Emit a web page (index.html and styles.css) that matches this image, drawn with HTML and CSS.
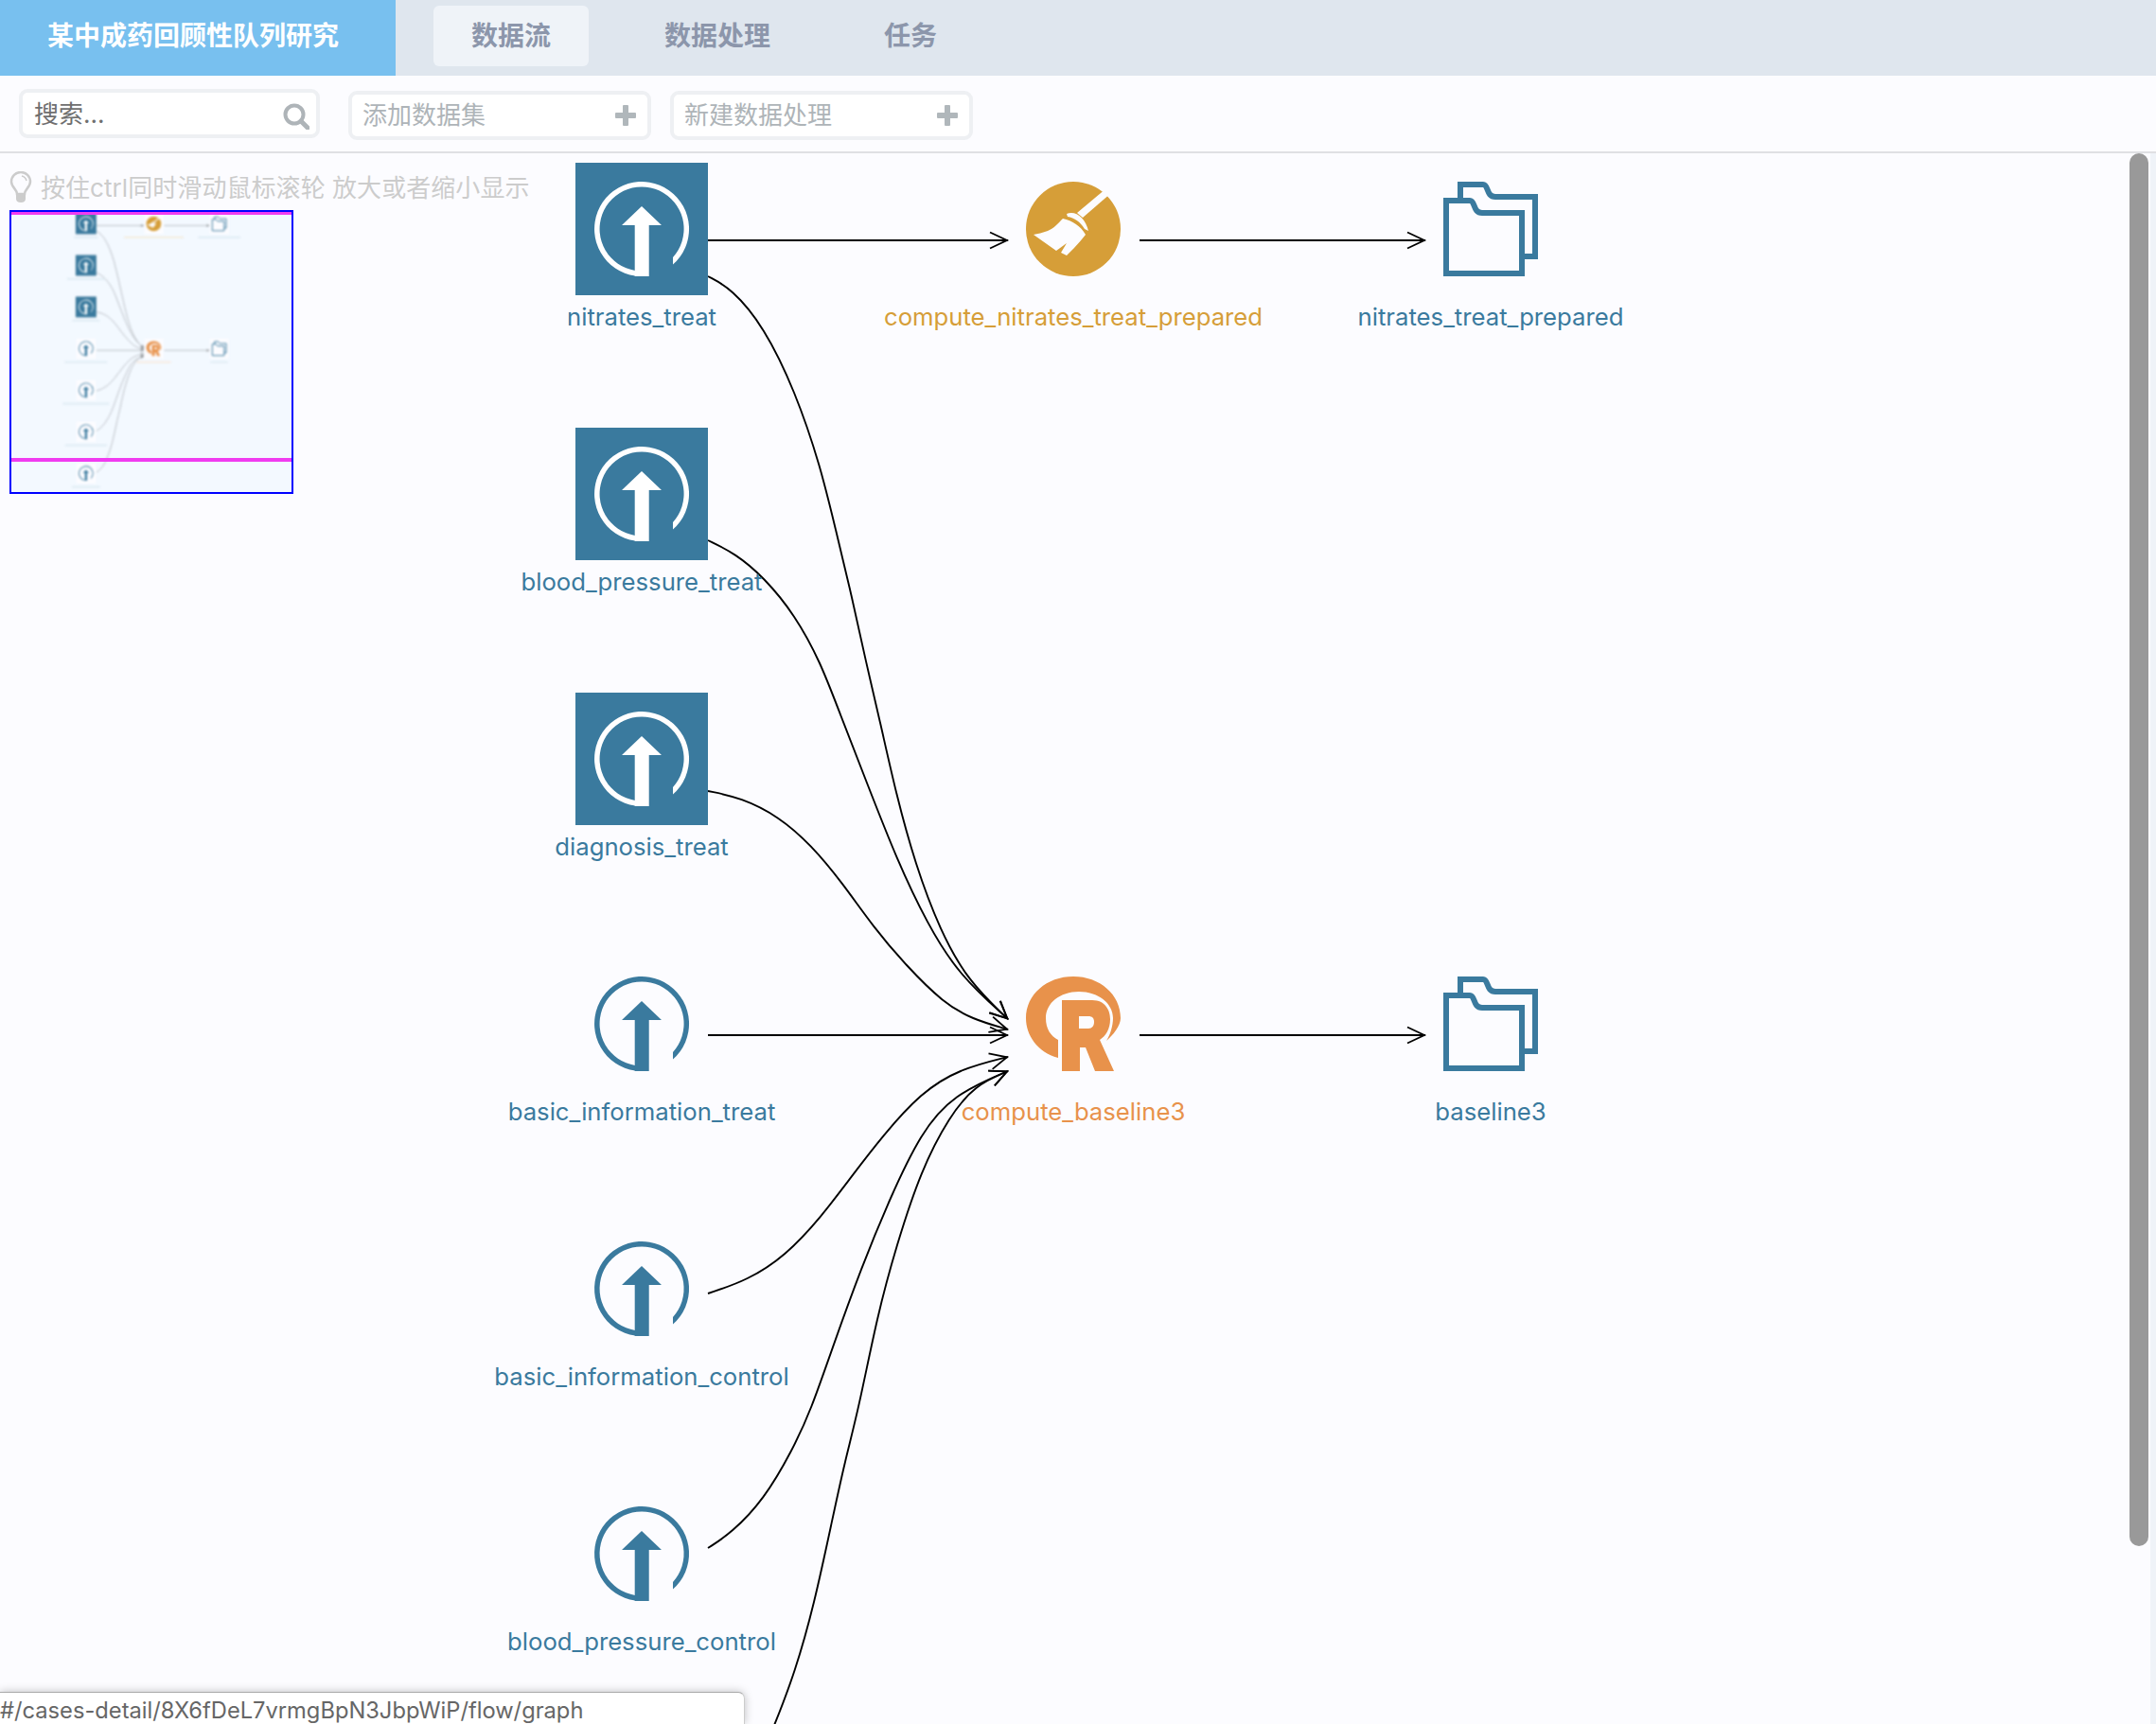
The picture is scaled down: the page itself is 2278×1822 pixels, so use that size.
FILE: index.html
```html
<!DOCTYPE html>
<html lang="zh-CN">
<head>
    <meta charset="UTF-8">
    <meta name="viewport" content="width=device-width, initial-scale=1.0">
    <title>某中成药回顾性队列研究</title>
    <link rel="stylesheet" href="styles.css">
</head>
<body>
    <div class="topbar">
        <div class="project-title">某中成药回顾性队列研究</div>
        <div class="tabs">
            <div class="tab active">数据流</div>
            <div class="tab">数据处理</div>
            <div class="tab">任务</div>
        </div>
    </div>

    <div class="toolbar">
        <div class="box search-box">
            <span class="search-text">搜索...</span>
            <svg class="search-icon" width="28" height="28" viewBox="0 0 28 28">
                <circle cx="12" cy="12" r="9.5" fill="none" stroke="#aeb4b8" stroke-width="4"/>
                <path d="M19 19L26 26" stroke="#aeb4b8" stroke-width="5" stroke-linecap="round"/>
            </svg>
        </div>
        <div class="box add-box">
            <span class="add-text">添加数据集</span>
            <span class="plus"></span>
        </div>
        <div class="box add-box second">
            <span class="add-text">新建数据处理</span>
            <span class="plus"></span>
        </div>
    </div>

    <div class="canvas">
        <svg class="graph" width="2278" height="1660" viewBox="0 162 2278 1660">
            <defs>
                <marker id="chevron" markerUnits="userSpaceOnUse" markerWidth="24" markerHeight="22" refX="20" refY="11" orient="auto">
                    <path d="M1 2.5L19 11L1 19.5" fill="none" stroke="#000" stroke-width="1.8"/>
                </marker>

                <g id="ico-upload">
                    <path d="M43 99.5A50 50 0 1 1 83 87.6V79.9A44.5 44.5 0 1 0 43 93.9Z"/>
                    <path d="M50 26L71 46H57.7V100H42.7V46H29Z"/>
                </g>
                <g id="ico-upload-box">
                    <rect x="-20" y="-20" width="140" height="140" fill="#3a7a9e"/>
                    <use href="#ico-upload" fill="#fff"/>
                </g>
                <g id="ico-broom">
                    <circle cx="50" cy="50" r="50" fill="#d69e38"/>
                    <path d="M85 7L90 12L60 38L54 33Z" fill="#fcfcff"/>
                    <path d="M43 34C52 30 63 38 66 52L62 50C58 43 51 38 44 37Z" fill="#fcfcff"/>
                    <path d="M39 39C34 44 30 49 23 52C18 54 12 55 8 56L32 73L43 65L37 75L43 78C50 71 57 64 63 56C58 47 49 41 39 39Z" fill="#fcfcff"/>
                </g>
                <g id="ico-r" fill="#e8924b">
                    <path d="M34 86C12 80 0 62 0 44C0 19 22 0 50 0C78 0 100 19 100 44C100 52 92 62 85 68C89 62 92 52 92 44C92 28 76 16 56 16C36 16 21 28 21 44C21 55 26 63 34 67Z"/>
                    <path fill-rule="evenodd" d="M38 25H70C84 25 89 36 89 45C89 56 84 63 78 67L93 100H73L63 75H57V100H38ZM56 42V55H66C70 55 72 52 72 48C72 44 70 42 66 42Z"/>
                </g>
                <g id="ico-folder" fill="none" stroke="#3a7a9e" stroke-width="6">
                    <path d="M3 20H28C34 20 31 33 41 33H83V97H3Z"/>
                    <path d="M18 20V3H42C48 3 45 16 55 16H97V79H83"/>
                </g>

                <g id="graph-art">
                    <g id="edges"></g>
                    <use href="#ico-upload-box" x="628" y="192"/>
                    <use href="#ico-upload-box" x="628" y="472"/>
                    <use href="#ico-upload-box" x="628" y="752"/>
                    <use href="#ico-upload" x="628" y="1032" fill="#3a7a9e"/>
                    <use href="#ico-upload" x="628" y="1312" fill="#3a7a9e"/>
                    <use href="#ico-upload" x="628" y="1592" fill="#3a7a9e"/>
                    <use href="#ico-upload" x="628" y="1872" fill="#3a7a9e"/>
                    <use href="#ico-broom" x="1084" y="192"/>
                    <use href="#ico-r" x="1084" y="1032"/>
                    <use href="#ico-folder" x="1525" y="192"/>
                    <use href="#ico-folder" x="1525" y="1032"/>
                </g>
            </defs>

            <use href="#graph-art"/>

            <g class="labels">
                <text class="lb-blue" x="678" y="344">nitrates_treat</text>
                <text class="lb-blue" x="678" y="624">blood_pressure_treat</text>
                <text class="lb-blue" x="678" y="904">diagnosis_treat</text>
                <text class="lb-blue" x="678" y="1184">basic_information_treat</text>
                <text class="lb-blue" x="678" y="1464">basic_information_control</text>
                <text class="lb-blue" x="678" y="1744">blood_pressure_control</text>
                <text class="lb-gold" x="1134" y="344">compute_nitrates_treat_prepared</text>
                <text class="lb-orange" x="1134" y="1184">compute_baseline3</text>
                <text class="lb-blue" x="1575" y="344">nitrates_treat_prepared</text>
                <text class="lb-blue" x="1575" y="1184">baseline3</text>
            </g>
        </svg>

        <div class="overview">
            <div class="hint">
                <svg class="bulb" width="24" height="34" viewBox="0 0 24 34">
                    <path d="M8 24C8 19 2 17 2 11A10 10 0 0 1 22 11C22 17 16 19 16 24Z" fill="none" stroke="#ccc" stroke-width="2.5"/>
                    <path d="M7 24H17V29Q17 33 12 33Q7 33 7 29Z" fill="#ccc"/>
                    <path d="M13 5Q17 6 18 10" fill="none" stroke="#ccc" stroke-width="1.5"/>
                </svg>
                <span class="hint-text">按住ctrl同时滑动鼠标滚轮 放大或者缩小显示</span>
            </div>
            <div class="minimap">
                <svg width="296" height="296" viewBox="0 0 296 296">
                    <g class="mini-art">
                        <g transform="translate(-27.6,-25.5) scale(.157)">
                            <g fill="#fcfcff">
                                <rect x="600" y="165" width="155" height="155"/>
                                <rect x="600" y="445" width="155" height="155"/>
                                <rect x="600" y="725" width="155" height="155"/>
                                <rect x="612" y="1015" width="132" height="135"/>
                                <rect x="612" y="1295" width="132" height="135"/>
                                <rect x="612" y="1575" width="132" height="135"/>
                                <rect x="612" y="1855" width="132" height="135"/>
                                <rect x="1070" y="175" width="130" height="135"/>
                                <rect x="1070" y="1015" width="130" height="135"/>
                                <rect x="1510" y="175" width="130" height="135"/>
                                <rect x="1510" y="1015" width="130" height="135"/>
                            </g>
                            <use href="#graph-art"/>
                            <g fill="#dbe9f1">
                                <rect x="597" y="328" width="161" height="10"/>
                                <rect x="551" y="608" width="254" height="10"/>
                                <rect x="586" y="888" width="184" height="10"/>
                                <rect x="535" y="1168" width="285" height="10"/>
                                <rect x="522" y="1448" width="311" height="10"/>
                                <rect x="537" y="1728" width="281" height="10"/>
                                <rect x="583" y="2008" width="190" height="10"/>
                                <rect x="1433" y="328" width="283" height="10"/>
                                <rect x="1517" y="1168" width="115" height="10"/>
                            </g>
                            <rect x="934" y="328" width="400" height="10" fill="#f4ead6"/>
                            <rect x="1018" y="1168" width="232" height="10" fill="#f8e8da"/>
                        </g>
                    </g>
                    <rect class="mini-view" x="0" y="-1" width="296" height="4"/>
                    <rect class="mini-view" x="0" y="260" width="296" height="4"/>
                </svg>
            </div>
        </div>

        <div class="scroll-track"></div>
        <div class="scroll-thumb"></div>
        <div class="status-link">#/cases-detail/8X6fDeL7vrmgBpN3JbpWiP/flow/graph</div>
    </div>

    <script src="graph.js"></script>
</body>
</html>
```

FILE: styles.css
```css
* {
    margin: 0;
    padding: 0;
    box-sizing: border-box;
}

html, body {
    width: 2278px;
    height: 1822px;
    overflow: hidden;
    background: #fcfcff;
}

body {
    display: flex;
    flex-direction: column;
    font-family: "Inter", "Noto Sans CJK SC", sans-serif;
}

.topbar {
    display: flex;
    height: 80px;
    background: #dfe6ee;
}

.project-title {
    width: 418px;
    padding-left: 50px;
    background: #78c0ef;
    color: #fff;
    font-size: 28px;
    font-weight: 700;
    line-height: 76px;
}

.tabs {
    display: flex;
    gap: 40px;
    margin-left: 40px;
    padding-top: 6px;
}

.tab {
    height: 64px;
    padding: 0 40px;
    border-radius: 6px;
    color: #8c96ab;
    font-size: 28px;
    font-weight: 700;
    line-height: 64px;
}

.tab.active {
    background: #eff3f8;
}

.toolbar {
    display: flex;
    align-items: flex-start;
    height: 82px;
    padding: 14px 0 0 20px;
    border-bottom: 2px solid #dfe0e3;
}

.box {
    display: flex;
    align-items: center;
    justify-content: space-between;
    height: 52px;
    background: #fff;
    border: 4px solid #eef0f3;
    border-radius: 9px;
    font-size: 26px;
}

.search-box {
    width: 318px;
    padding: 0 7px 0 12px;
}

.search-text {
    margin-top: -3px;
    color: #6f6f6f;
}

.search-icon {
    margin-top: 6px;
}

.add-box {
    width: 320px;
    margin: 2px 0 0 30px;
    padding: 0 12px 0 11px;
}

.add-box.second {
    margin-left: 20px;
}

.add-text {
    margin-top: -6px;
    color: #aeb4b8;
}

.plus {
    position: relative;
    width: 22px;
    height: 22px;
}

.plus::before,
.plus::after {
    content: "";
    position: absolute;
    background: #b0b7bb;
    border-radius: 1px;
}

.plus::before {
    left: 0;
    top: 8px;
    width: 22px;
    height: 6px;
}

.plus::after {
    left: 8px;
    top: 0;
    width: 6px;
    height: 22px;
}

.canvas {
    position: relative;
    flex: 1;
    overflow: hidden;
}

.graph {
    position: absolute;
    left: 0;
    top: 0;
}

#edges {
    fill: none;
    stroke: var(--edge-color, #000);
    stroke-width: var(--edge-width, 1.9px);
}

.labels text {
    font-size: 25.7px;
    text-anchor: middle;
}

.lb-blue {
    fill: #3a7a9e;
}

.lb-gold {
    fill: #d69e38;
}

.lb-orange {
    fill: #e8924b;
}

.overview {
    position: absolute;
    left: 10px;
    top: 19px;
}

.hint {
    display: flex;
    align-items: center;
    height: 34px;
    color: #ccc;
    font-size: 26px;
    white-space: nowrap;
}

.hint-text {
    margin-top: -4px;
    letter-spacing: 0.06px;
}

.bulb {
    margin-right: 9px;
}

.minimap {
    width: 300px;
    height: 300px;
    margin-top: 7px;
    background: #f3f9ff;
    border: 2px solid #0000ff;
}

.minimap svg {
    display: block;
}

.mini-art {
    --edge-color: #b9bdc2;
    --edge-width: 6px;
    filter: blur(0.8px);
}

.mini-view {
    fill: #f03cf0;
}

.scroll-track {
    position: absolute;
    right: 0;
    top: 0;
    bottom: 0;
    width: 6px;
    background: #eff3f8;
}

.scroll-thumb {
    position: absolute;
    left: 2250px;
    top: 0;
    width: 20px;
    height: 1472px;
    background: #999;
    border-radius: 10px;
}

.status-link {
    position: absolute;
    left: 0;
    bottom: 0;
    width: 787px;
    height: 34px;
    background: #fff;
    border-top: 1px solid #aaa;
    border-right: 1px solid #ccc;
    border-top-right-radius: 7px;
    box-shadow: 0 0 10px rgba(0, 0, 0, 0.25);
    color: #666;
    font-size: 23.7px;
    line-height: 37px;
    white-space: nowrap;
}
```

FILE: graph.js
```js
// 连线经过的点，按页面坐标
const EDGES = [
    [[748, 254], [1065, 254]],
    [[1204, 254], [1506, 254]],
    [[748, 1094], [1065, 1094]],
    [[1204, 1094], [1506, 1094]],
    [[748, 292], [773, 305], [807, 345], [840, 413], [867, 493], [883, 560], [900, 630], [915, 700], [930, 763], [947, 840], [967, 913], [993, 983], [1023, 1037], [1065, 1077]],
    [[748, 571], [777, 585], [807, 610], [840, 650], [867, 700], [887, 753], [917, 830], [947, 907], [980, 977], [1013, 1030], [1065, 1077]],
    [[748, 836], [783, 843], [823, 863], [857, 893], [890, 933], [923, 980], [957, 1020], [997, 1060], [1027, 1077], [1065, 1088]],
    [[748, 1367], [790, 1353], [830, 1327], [867, 1287], [900, 1243], [933, 1200], [973, 1155], [1013, 1130], [1065, 1117]],
    [[748, 1636], [773, 1620], [807, 1585], [837, 1533], [857, 1490], [880, 1423], [910, 1340], [940, 1267], [973, 1197], [1007, 1157], [1065, 1132]],
    [[748, 1916], [795, 1878], [819, 1822], [840, 1767], [860, 1697], [880, 1603], [893, 1543], [907, 1490], [927, 1390], [947, 1317], [973, 1237], [1003, 1180], [1030, 1147], [1065, 1132]]
];

// B样条，把点连成平滑曲线
function basisPath(points) {
    const [first, ...rest] = points;
    if (rest.length === 1) {
        return `M${first[0]} ${first[1]}L${rest[0][0]} ${rest[0][1]}`;
    }
    let d = `M${first[0]} ${first[1]}`;
    d += `L${(5 * first[0] + rest[0][0]) / 6} ${(5 * first[1] + rest[0][1]) / 6}`;
    const pts = [...points, points[points.length - 1]];
    for (let i = 2; i < pts.length; i++) {
        const [x0, y0] = pts[i - 2];
        const [x1, y1] = pts[i - 1];
        const [x, y] = pts[i];
        d += `C${(2 * x0 + x1) / 3} ${(2 * y0 + y1) / 3} ${(x0 + 2 * x1) / 3} ${(y0 + 2 * y1) / 3} ${(x0 + 4 * x1 + x) / 6} ${(y0 + 4 * y1 + y) / 6}`;
    }
    const last = points[points.length - 1];
    return d + `L${last[0]} ${last[1]}`;
}

const edgesGroup = document.getElementById('edges');
EDGES.forEach(points => {
    const path = document.createElementNS('http://www.w3.org/2000/svg', 'path');
    path.setAttribute('d', basisPath(points));
    path.setAttribute('marker-end', 'url(#chevron)');
    edgesGroup.appendChild(path);
});
```
